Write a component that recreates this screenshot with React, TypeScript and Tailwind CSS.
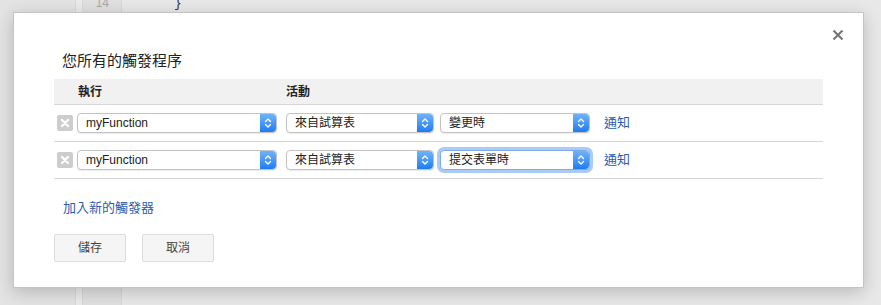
const cjk = "font-['Helvetica_Neue','Liberation_Sans','Noto_Sans_CJK_TC',sans-serif]"

function Stepper() {
  return (
    <div className="flex h-full w-[16px] items-center justify-center rounded-r-[4px] bg-gradient-to-b from-[#6db3f9] to-[#1c7cf1]">
      <svg width="8" height="12" viewBox="0 0 8 12" fill="none" stroke="white" strokeWidth="1.4" strokeLinecap="round" strokeLinejoin="round">
        <path d="M1.5 4.5 L4 2 L6.5 4.5" />
        <path d="M1.5 7.5 L4 10 L6.5 7.5" />
      </svg>
    </div>
  )
}

function Select({ label, width, focused }: { label: string; width: string; focused?: boolean }) {
  return (
    <div
      className={`flex h-[20px] ${width} items-center justify-between rounded-[4px] border bg-white pl-[8px] ${
        focused ? "border-[#7fa9e6] shadow-[0_0_0_3px_#a9cbf5]" : "border-[#c3c3c3] shadow-[0_1px_1px_rgba(0,0,0,0.08)]"
      }`}
    >
      <span className="text-[12px] leading-none text-[#222]">{label}</span>
      <Stepper />
    </div>
  )
}

function RemoveBox() {
  return (
    <div className="flex h-[16px] w-[16px] items-center justify-center rounded-[2px] bg-[#cdcdcd]">
      <svg width="10" height="10" viewBox="0 0 10 10" stroke="white" strokeWidth="2.4" strokeLinecap="round">
        <path d="M2 2 L8 8 M8 2 L2 8" />
      </svg>
    </div>
  )
}

function TriggerRow({ event, focused }: { event: string; focused?: boolean }) {
  return (
    <div className="flex h-[37px] items-center border-b border-[#d6d6d6] pl-[3px]">
      <RemoveBox />
      <div className="ml-[4px]">
        <Select label="myFunction" width="w-[200px]" />
      </div>
      <div className="ml-[9px]">
        <Select label="來自試算表" width="w-[148px]" />
      </div>
      <div className="ml-[6px]">
        <Select label={event} width="w-[150px]" focused={focused} />
      </div>
      <a className="ml-[14px] text-[13px] text-[#2a5db0]">通知</a>
    </div>
  )
}

export default function App() {
  return (
    <div className={`relative h-[305px] w-[881px] overflow-hidden bg-[#e4e4e4] ${cjk}`}>
      {/* editor behind the dialog */}
      <div className="flex h-full">
        <div className="w-[75px] bg-[#e3e3e3]" />
        <div className="w-[8px] border-x border-[#d8d8d8] bg-[#ebebeb]" />
        <div className="w-[39px] border-r border-[#d6d6d6] bg-[#e0e0e0] text-right">
          <div className="-mt-[6px] pr-[12px] font-['Liberation_Sans'] text-[12px] text-[#a8a8a8]">14</div>
        </div>
        <div className="flex-1 bg-[#e8e8e8]">
          <div className="-mt-[6px] pl-[52px] font-['Liberation_Mono'] text-[13px] text-[#333]">{"}"}</div>
        </div>
      </div>

      {/* dialog */}
      <div className="absolute left-[13px] top-[12px] h-[276px] w-[851px] border border-[#c4c4c4] bg-white shadow-[0_4px_16px_rgba(0,0,0,0.2)]">
        <button className="absolute right-[19px] top-[16px] text-[#777]">
          <svg width="12" height="12" viewBox="0 0 12 12" stroke="currentColor" strokeWidth="2.2">
            <path d="M1.5 1.5 L10.5 10.5 M10.5 1.5 L1.5 10.5" />
          </svg>
        </button>

        <div className="pl-[40px] pr-[40px] pt-[38px]">
          <h2 className="pl-[8px] text-[15px] leading-[20px] text-[#222]">您所有的觸發程序</h2>

          <div className="mt-[8px] w-[769px]">
            <div className="flex h-[26px] items-center border-b border-[#d6d6d6] bg-[#f1f1f1] text-[12px] font-bold text-[#222]">
              <span className="w-[232px] pl-[24px]">執行</span>
              <span>活動</span>
            </div>
            <TriggerRow event="變更時" />
            <TriggerRow event="提交表單時" focused />
          </div>

          <a className="mt-[20px] block pl-[9px] text-[13px] leading-[18px] text-[#2a5db0]">加入新的觸發器</a>

          <div className="mt-[17px] flex gap-[16px]">
            <button className="h-[28px] w-[72px] rounded-[2px] border border-[#dcdcdc] bg-[#f5f5f5] text-[12px] text-[#444]">儲存</button>
            <button className="h-[28px] w-[72px] rounded-[2px] border border-[#dcdcdc] bg-[#f5f5f5] text-[12px] text-[#444]">取消</button>
          </div>
        </div>
      </div>
    </div>
  )
}
